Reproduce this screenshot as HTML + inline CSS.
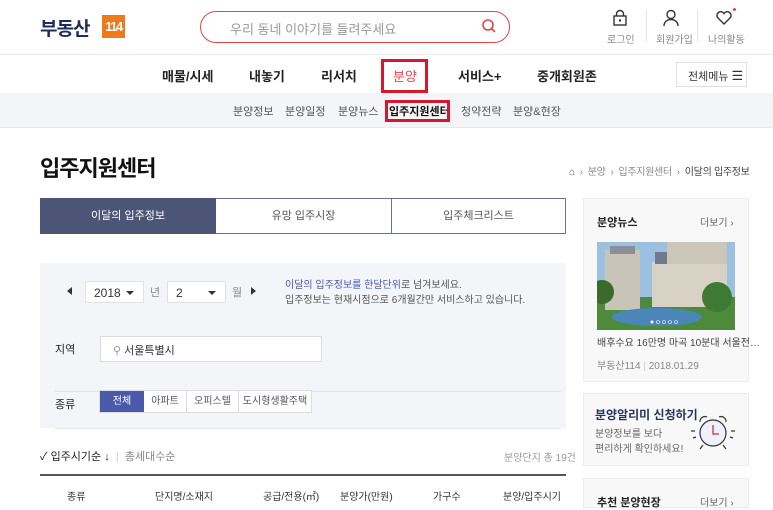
<!DOCTYPE html>
<html><head><meta charset="utf-8"><style>
*{margin:0;padding:0;box-sizing:border-box}
body{width:773px;height:504px;overflow:hidden;background:#fff;font-family:"Liberation Sans","Noto Sans CJK KR",sans-serif;color:#333;position:relative}
.a{position:absolute;white-space:nowrap}
.f11{font-size:11px}.f10{font-size:10px}.f12{font-size:12px}
</style></head><body>
<div class="a" style="left:40px;top:14px;font-size:19px;font-weight:bold;color:#1f2d5c;letter-spacing:-1px">부동산</div>
<div class="a" style="left:102px;top:15px;width:23px;height:23px;background:#f07a1a;color:#fff;font-weight:bold;font-size:13px;letter-spacing:-1.5px;text-align:center;line-height:23px">114</div>
<div class="a" style="left:200px;top:11px;width:310px;height:32px;border:1.5px solid #e0454c;border-radius:16px"></div>
<div class="a" style="left:230px;top:19px;font-size:13px;color:#999">우리 동네 이야기를 들려주세요</div>
<svg class="a" style="left:481px;top:18px" width="16" height="18" viewBox="0 0 16 18"><circle cx="7" cy="7" r="5" fill="none" stroke="#e0454c" stroke-width="1.6"/><line x1="10.5" y1="10.5" x2="14" y2="14" stroke="#e0454c" stroke-width="1.6"/></svg>
<svg class="a" style="left:612px;top:9px" width="16" height="18" viewBox="0 0 16 18"><rect x="2" y="7" width="12" height="9" fill="none" stroke="#333" stroke-width="1.4"/><path d="M4.5 7V5a3.5 3.5 0 0 1 7 0v2" fill="none" stroke="#333" stroke-width="1.4"/><circle cx="8" cy="11.5" r="1.2" fill="#333"/></svg>
<div class="a f10" style="left:607px;top:31px;color:#888">로그인</div>
<div class="a" style="left:646px;top:10px;width:1px;height:32px;background:#e5e5e5"></div>
<svg class="a" style="left:662px;top:9px" width="18" height="18" viewBox="0 0 18 18"><circle cx="9" cy="5.5" r="4" fill="none" stroke="#333" stroke-width="1.4"/><path d="M2 17c0-4 3-6.5 7-6.5s7 2.5 7 6.5" fill="none" stroke="#333" stroke-width="1.4"/></svg>
<div class="a f10" style="left:656px;top:31px;color:#888">회원가입</div>
<div class="a" style="left:697px;top:10px;width:1px;height:32px;background:#e5e5e5"></div>
<svg class="a" style="left:715px;top:10px" width="18" height="16" viewBox="0 0 18 16"><path d="M9 14L2.5 7.5a3.5 3.5 0 0 1 6.5-4 3.5 3.5 0 0 1 6.5 4z" fill="none" stroke="#333" stroke-width="1.4"/></svg>
<div class="a" style="left:733px;top:8px;width:3px;height:3px;border-radius:2px;background:#e0454c"></div>
<div class="a f10" style="left:708px;top:31px;color:#888">나의활동</div>
<div class="a" style="left:0;top:54px;width:773px;height:1px;background:#e8e8e8"></div>
<div class="a" style="left:0;top:66px;font-size:13px;font-weight:bold;color:#222;width:773px">
<span class="a" style="left:162px">매물/시세</span><span class="a" style="left:249px">내놓기</span><span class="a" style="left:321px">리서치</span><span class="a" style="left:393px;color:#e0454c;font-weight:normal">분양</span><span class="a" style="left:458px">서비스+</span><span class="a" style="left:537px">중개회원존</span></div>
<div class="a" style="left:381px;top:59px;width:47px;height:34px;border:3px solid #d8182a"></div>
<div class="a" style="left:676px;top:62px;width:71px;height:25px;border:1px solid #e0e0e0;font-size:11px;color:#333;padding:5px 0 0 11px">전체메뉴 <span style="font-size:13px">☰</span></div>
<div class="a" style="left:0;top:93px;width:773px;height:35px;background:#f4f5f8;border-bottom:1px solid #e8e8e8"></div>
<div class="a f11" style="left:0;top:103px;color:#555;width:773px">
<span class="a" style="left:233px">분양정보</span><span class="a" style="left:285px">분양일정</span><span class="a" style="left:338px">분양뉴스</span><span class="a" style="left:389px;color:#111;font-weight:bold">입주지원센터</span><span class="a" style="left:461px">청약전략</span><span class="a" style="left:513px">분양&amp;현장</span></div>
<div class="a" style="left:385px;top:100px;width:65px;height:22px;border:3px solid #d8182a"></div>
<div class="a" style="left:40px;top:151px;font-size:22px;font-weight:bold;color:#111;letter-spacing:-1px">입주지원센터</div>
<div class="a f10" style="left:569px;top:163px;color:#888;letter-spacing:-0.3px"><span style="color:#555">⌂</span> &nbsp;›&nbsp; 분양 &nbsp;›&nbsp; 입주지원센터 &nbsp;›&nbsp; <span style="color:#444">이달의 입주정보</span></div>
<div class="a" style="left:40px;top:198px;width:526px;height:36px;border:1px solid #6b7191"></div>
<div class="a f11" style="left:40px;top:198px;width:176px;height:36px;background:#4d5577;color:#fff;text-align:center;line-height:36px">이달의 입주정보</div>
<div class="a f11" style="left:216px;top:198px;width:175px;height:36px;text-align:center;line-height:36px;color:#555">유망 입주시장</div>
<div class="a" style="left:391px;top:199px;width:1px;height:34px;background:#6b7191"></div>
<div class="a f11" style="left:391px;top:198px;width:175px;height:36px;text-align:center;line-height:36px;color:#555">입주체크리스트</div>
<div class="a" style="left:40px;top:263px;width:526px;height:165px;background:#f4f5f8"></div>
<div class="a" style="left:67px;top:287px;width:0;height:0;border-top:4px solid transparent;border-bottom:4px solid transparent;border-right:5px solid #333"></div>
<div class="a f12" style="left:85px;top:281px;width:59px;height:22px;background:#fff;border:1px solid #e2e2e2;padding:4px 0 0 8px">2018<span style="position:absolute;right:9px;top:9px;border-left:4px solid transparent;border-right:4px solid transparent;border-top:4px solid #333"></span></div>
<div class="a f11" style="left:150px;top:284px;color:#888">년</div>
<div class="a f12" style="left:167px;top:281px;width:59px;height:22px;background:#fff;border:1px solid #e2e2e2;padding:4px 0 0 8px">2<span style="position:absolute;right:9px;top:9px;border-left:4px solid transparent;border-right:4px solid transparent;border-top:4px solid #333"></span></div>
<div class="a f11" style="left:232px;top:284px;color:#888">월</div>
<div class="a" style="left:251px;top:287px;width:0;height:0;border-top:4px solid transparent;border-bottom:4px solid transparent;border-left:5px solid #333"></div>
<div class="a f10" style="left:285px;top:278px;color:#555;line-height:15px"><span style="color:#4a5aa8">이달의 입주정보를 한달단위</span>로 넘겨보세요.<br>입주정보는 현재시점으로 6개월간만 서비스하고 있습니다.</div>
<div class="a f11" style="left:55px;top:341px;color:#222">지역</div>
<div class="a f11" style="left:100px;top:336px;width:222px;height:26px;background:#fff;border:1px solid #ddd;padding:5px 0 0 12px;color:#333"><span style="color:#999">⚲</span> 서울특별시</div>
<div class="a" style="left:55px;top:391px;width:506px;height:1px;background:#e3e4e8"></div>
<div class="a f11" style="left:55px;top:396px;color:#222">종류</div>
<div class="a f10" style="left:99px;top:390px;height:23px;display:flex;border:1px solid #ddd;background:#fff;color:#555">
<div style="width:44px;background:#4a5aa8;color:#fff;text-align:center;line-height:22px">전체</div>
<div style="width:43px;text-align:center;line-height:22px;border-right:1px solid #ddd">아파트</div>
<div style="width:52px;text-align:center;line-height:22px;border-right:1px solid #ddd">오피스텔</div>
<div style="width:72px;text-align:center;line-height:22px">도시형생활주택</div></div>
<div class="a" style="left:55px;top:428px;width:506px;height:1px;background:#e3e4e8"></div>
<div class="a f11" style="left:40px;top:448px;color:#222">✓ 입주시기순 ↓ <span style="color:#ccc">&nbsp;|&nbsp;</span> <span style="color:#888">총세대수순</span></div>
<div class="a f10" style="left:504px;top:449px;color:#999">분양단지 총 19건</div>
<div class="a" style="left:40px;top:474px;width:526px;height:2px;background:#555"></div>
<div class="a f10" style="left:0;top:488px;color:#333;width:580px">
<span class="a" style="left:67px">종류</span><span class="a" style="left:155px">단지명/소재지</span><span class="a" style="left:263px">공급/전용(㎡)</span><span class="a" style="left:340px">분양가(만원)</span><span class="a" style="left:433px">가구수</span><span class="a" style="left:503px">분양/입주시기</span></div>
<div class="a" style="left:583px;top:198px;width:166px;height:184px;background:#f8f8f9;border:1px solid #ececec"></div>
<div class="a f11" style="left:597px;top:214px;font-weight:bold;color:#222">분양뉴스</div>
<div class="a f10" style="left:700px;top:214px;color:#666">더보기 ›</div>
<svg class="a" style="left:597px;top:242px" width="138" height="88" viewBox="0 0 138 88">
<rect width="138" height="88" fill="#9cc0e0"/><rect y="55" width="138" height="33" fill="#4d8a3c"/>
<rect x="8" y="8" width="35" height="60" fill="#c9c4b8"/><rect x="13" y="4" width="25" height="8" fill="#8a8f9a"/>
<rect x="55" y="20" width="75" height="45" fill="#d8d2c4"/><rect x="58" y="10" width="70" height="12" fill="#707a8c"/>
<rect x="70" y="0" width="60" height="22" fill="#cbc6b8"/>
<ellipse cx="60" cy="75" rx="45" ry="9" fill="#4a86b8"/><circle cx="120" cy="55" r="15" fill="#3e7a34"/><circle cx="5" cy="50" r="12" fill="#3a6a2c"/>
<circle cx="55" cy="80" r="1.5" fill="#fff"/><circle cx="61" cy="80" r="1.5" fill="none" stroke="#fff" stroke-width=".6"/><circle cx="67" cy="80" r="1.5" fill="none" stroke="#fff" stroke-width=".6"/><circle cx="73" cy="80" r="1.5" fill="none" stroke="#fff" stroke-width=".6"/><circle cx="79" cy="80" r="1.5" fill="none" stroke="#fff" stroke-width=".6"/></svg>
<div class="a f10" style="left:597px;top:334px;color:#444">배후수요 16만명 마곡 10분대 서울전…</div>
<div class="a f10" style="left:597px;top:357px;color:#888">부동산114 <span style="color:#ccc">|</span> 2018.01.29</div>
<div class="a" style="left:583px;top:393px;width:166px;height:73px;background:#f8f8f9;border:1px solid #ececec"></div>
<div class="a" style="left:595px;top:406px;font-size:12px;font-weight:bold;color:#2a3264">분양알리미 신청하기</div>
<div class="a f10" style="left:595px;top:427px;color:#666;line-height:15px">분양정보를 보다<br>편리하게 확인하세요!</div>
<svg class="a" style="left:688px;top:412px" width="50" height="42" viewBox="0 0 50 42"><circle cx="25" cy="21" r="13" fill="#eef0fb" stroke="#333" stroke-width="1.2"/><path d="M12 10a5 5 0 0 1 7-5M38 10a5 5 0 0 0-7-5" fill="none" stroke="#333" stroke-width="1.2"/><path d="M25 13v9h6" fill="none" stroke="#e0454c" stroke-width="1.5"/><path d="M15 33l-3 4M35 33l3 4M3 19h4M43 19h4M5 26l3-1M45 26l-3-1" stroke="#333" stroke-width="1.2"/></svg>
<div class="a" style="left:583px;top:478px;width:166px;height:30px;background:#f8f8f9;border:1px solid #ececec"></div>
<div class="a f11" style="left:597px;top:494px;font-weight:bold;color:#222">추천 분양현장</div>
<div class="a f10" style="left:700px;top:494px;color:#666">더보기 ›</div>
</body></html>
